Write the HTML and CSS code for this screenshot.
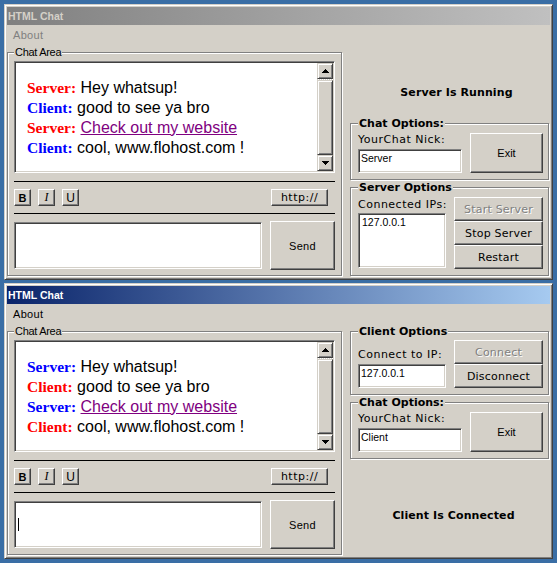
FILE: index.html
```html
<!DOCTYPE html>
<html>
<head>
<meta charset="utf-8">
<title>HTML Chat</title>
<link rel="stylesheet" href="styles.css">
</head>
<body>
<div class="desktop">

  <div class="window inactive">
    <div class="titlebar">HTML Chat</div>
    <div class="menubar"><span class="menu-item">About</span></div>
    <div class="content">
      <fieldset class="group chat-area">
        <legend>Chat Area</legend>
        <div class="chatbox sunken">
          <div class="messages">
            <div class="msg"><span class="nick red">Server:</span> Hey whatsup!</div>
            <div class="msg"><span class="nick blue">Client:</span> good to see ya bro</div>
            <div class="msg"><span class="nick red">Server:</span> <a class="link" href="#">Check out my website</a></div>
            <div class="msg"><span class="nick blue">Client:</span> cool, www.flohost.com !</div>
          </div>
          <div class="scrollbar">
            <div class="sb-btn raised"><svg width="7" height="4" viewBox="0 0 7 4" shape-rendering="crispEdges"><path d="M3 0h1v1H3zM2 1h3v1H2zM1 2h5v1H1zM0 3h7v1H0z"/></svg></div>
            <div class="sb-thumb raised"></div>
            <div class="sb-btn raised"><svg width="7" height="4" viewBox="0 0 7 4" shape-rendering="crispEdges"><path d="M0 0h7v1H0zM1 1h5v1H1zM2 2h3v1H2zM3 3h1v1H3z"/></svg></div>
          </div>
        </div>
        <hr class="sep sep-top">
        <div class="toolbar">
          <button class="btn tool tool-b">B</button>
          <button class="btn tool tool-i">I</button>
          <button class="btn tool tool-u">U</button>
          <button class="btn http">http://</button>
        </div>
        <hr class="sep">
        <div class="compose">
          <div class="compose-input sunken"></div>
          <button class="btn send">Send</button>
        </div>
      </fieldset>

      <div class="side">
        <div class="status status-server">Server Is Running</div>
        <fieldset class="group opts">
          <legend>Chat Options:</legend>
          <div class="row">
            <div class="col col-wide">
              <div class="label">YourChat Nick:</div>
              <div class="field sunken">Server</div>
            </div>
            <button class="btn exit">Exit</button>
          </div>
        </fieldset>
        <fieldset class="group server-opts">
          <legend>Server Options</legend>
          <div class="row">
            <div class="col col-narrow">
              <div class="label label-ips">Connected IPs:</div>
              <div class="listbox sunken">127.0.0.1</div>
            </div>
            <div class="btn-stack">
              <button class="btn stack-btn disabled">Start Server</button>
              <button class="btn stack-btn">Stop Server</button>
              <button class="btn stack-btn">Restart</button>
            </div>
          </div>
        </fieldset>
      </div>
    </div>
  </div>

  <div class="window active">
    <div class="titlebar">HTML Chat</div>
    <div class="menubar"><span class="menu-item">About</span></div>
    <div class="content">
      <fieldset class="group chat-area">
        <legend>Chat Area</legend>
        <div class="chatbox sunken">
          <div class="messages">
            <div class="msg"><span class="nick blue">Server:</span> Hey whatsup!</div>
            <div class="msg"><span class="nick red">Client:</span> good to see ya bro</div>
            <div class="msg"><span class="nick blue">Server:</span> <a class="link" href="#">Check out my website</a></div>
            <div class="msg"><span class="nick red">Client:</span> cool, www.flohost.com !</div>
          </div>
          <div class="scrollbar">
            <div class="sb-btn raised"><svg width="7" height="4" viewBox="0 0 7 4" shape-rendering="crispEdges"><path d="M3 0h1v1H3zM2 1h3v1H2zM1 2h5v1H1zM0 3h7v1H0z"/></svg></div>
            <div class="sb-thumb raised"></div>
            <div class="sb-btn raised"><svg width="7" height="4" viewBox="0 0 7 4" shape-rendering="crispEdges"><path d="M0 0h7v1H0zM1 1h5v1H1zM2 2h3v1H2zM3 3h1v1H3z"/></svg></div>
          </div>
        </div>
        <hr class="sep sep-top">
        <div class="toolbar">
          <button class="btn tool tool-b">B</button>
          <button class="btn tool tool-i">I</button>
          <button class="btn tool tool-u">U</button>
          <button class="btn http">http://</button>
        </div>
        <hr class="sep">
        <div class="compose">
          <div class="compose-input sunken"><span class="caret"></span></div>
          <button class="btn send">Send</button>
        </div>
      </fieldset>

      <div class="side">
        <fieldset class="group client-opts">
          <legend>Client Options</legend>
          <div class="row">
            <div class="col col-narrow">
              <div class="label label-ip">Connect to IP:</div>
              <div class="field sunken">127.0.0.1</div>
            </div>
            <div class="btn-stack">
              <button class="btn stack-btn disabled">Connect</button>
              <button class="btn stack-btn">Disconnect</button>
            </div>
          </div>
        </fieldset>
        <fieldset class="group opts opts-client">
          <legend>Chat Options:</legend>
          <div class="row">
            <div class="col col-wide">
              <div class="label">YourChat Nick:</div>
              <div class="field sunken">Client</div>
            </div>
            <button class="btn exit">Exit</button>
          </div>
        </fieldset>
        <div class="status status-client">Client Is Connected</div>
      </div>
    </div>
  </div>

</div>
</body>
</html>
```

FILE: styles.css
```css
* {
  box-sizing: border-box;
}

html,
body {
  margin: 0;
  padding: 0;
}

body {
  background: #3a6ea5;
  font-family: "DejaVu Sans", sans-serif;
  font-size: 11px;
  color: #000;
}

.desktop {
  display: flex;
  flex-direction: column;
  gap: 3px;
  padding: 4px 0 0 4px;
}

/* ---------- window frame ---------- */
.window {
  width: 549px;
  height: 276px;
  display: flex;
  flex-direction: column;
  background: #d4d0c8;
  border: 1px solid;
  border-color: #d4d0c8 #404040 #404040 #d4d0c8;
  box-shadow: inset 1px 1px 0 #fff, inset -1px -1px 0 #808080;
  padding: 2px;
}

.titlebar {
  height: 18px;
  padding-left: 1px;
  font: bold 10.5px/18px "Liberation Sans", sans-serif;
}

.inactive .titlebar {
  background: linear-gradient(to right, #808080, #c0c0c0);
  color: #d4d0c8;
}

.active .titlebar {
  background: linear-gradient(to right, #0a246a, #a6caf0);
  color: #fff;
}

.menubar {
  height: 20px;
  padding-left: 6px;
  font: 11px/20px "Liberation Sans", sans-serif;
  letter-spacing: 0.3px;
}

.inactive .menu-item {
  color: #808080;
}

.content {
  flex: 1;
  display: flex;
  gap: 8px;
}

/* ---------- group boxes ---------- */
.group {
  margin: 0;
  padding: 0;
  min-width: 0;
  border: 1px solid #808080;
  box-shadow: 1px 1px 0 #fff, inset 1px 1px 0 #fff;
}

.group legend {
  padding: 0 1px;
  margin: 0;
  height: 13px;
  background: #d4d0c8;
  font: bold 11px/13px "DejaVu Sans", sans-serif;
  white-space: nowrap;
}

.chat-area {
  width: 335px;
  height: 230px;
  margin-top: 1px;
  padding: 2px 6px 5px 6px;
}

.chat-area legend {
  font: 11px/12px "Liberation Sans", sans-serif;
  letter-spacing: -0.3px;
}

/* ---------- 3D styles ---------- */
.sunken {
  background: #fff;
  border: 1px solid;
  border-color: #808080 #fff #fff #808080;
  box-shadow: inset 1px 1px 0 #404040, inset -1px -1px 0 #d4d0c8;
}

.raised {
  background: #d4d0c8;
  border: 1px solid;
  border-color: #d4d0c8 #404040 #404040 #d4d0c8;
  box-shadow: inset 1px 1px 0 #fff, inset -1px -1px 0 #808080;
}

.btn {
  margin: 0;
  padding: 0;
  font: 11px "DejaVu Sans", sans-serif;
  color: #000;
  background: #d4d0c8;
  border: 1px solid;
  border-color: #fff #404040 #404040 #fff;
  box-shadow: inset -1px -1px 0 #808080;
  display: flex;
  align-items: center;
  justify-content: center;
  white-space: nowrap;
}

.btn.disabled {
  color: #808080;
  text-shadow: 1px 1px 0 #fff;
}

/* ---------- chat display ---------- */
.chatbox {
  height: 112px;
  display: flex;
  padding: 1px;
}

.messages {
  flex: 1;
  padding: 15px 0 0 11px;
  font: 16px/20px "Liberation Sans", Arial, sans-serif;
  white-space: nowrap;
  overflow: hidden;
}

.nick {
  font: bold 15.5px/20px "Liberation Serif", serif;
}

.red {
  color: #ff0000;
}

.blue {
  color: #0000ff;
}

.link {
  color: #800080;
  text-decoration: underline;
}

.scrollbar {
  width: 16px;
  display: flex;
  flex-direction: column;
  background: repeating-conic-gradient(#fff 0 25%, #d4d0c8 0 50%) 0 0 / 2px 2px;
}

.sb-btn {
  height: 16px;
  flex: none;
  display: flex;
  align-items: center;
  justify-content: center;
}

.sb-btn svg {
  display: block;
  fill: #000;
}

.sb-thumb {
  flex: 1;
  margin-top: 1px;
}

/* ---------- separators / toolbar ---------- */
.sep {
  margin: 7px 0;
  height: 1px;
  border: 0;
  background: #000;
}

.sep-top {
  margin-top: 8px;
}

.toolbar {
  height: 17px;
  display: flex;
  gap: 7px;
}

.tool {
  width: 17px;
  height: 17px;
}

.tool-b {
  font: bold 11px "Liberation Sans", sans-serif;
}

.tool-i {
  font: italic 12px "Liberation Serif", serif;
}

.tool-u {
  font: 12px "Liberation Sans", sans-serif;
}

.http {
  width: 57px;
  height: 17px;
  margin-left: auto;
  margin-right: 7px;
  letter-spacing: 0.5px;
}

.compose {
  height: 49px;
  display: flex;
  align-items: center;
  gap: 8px;
}

.compose-input {
  width: 248px;
  height: 47px;
  display: flex;
  align-items: center;
  padding-left: 3px;
}

.caret {
  width: 1px;
  height: 13px;
  background: #000;
}

.send {
  width: 65px;
  height: 49px;
  font: 11px "Liberation Sans", sans-serif;
  letter-spacing: 0.3px;
}

/* ---------- side column ---------- */
.side {
  width: 200px;
  display: flex;
  flex-direction: column;
}

.side .group {
  width: 199px;
  padding: 3px 5px 6px 7px;
}

.status {
  font: bold 11px/13px "DejaVu Sans", sans-serif;
  text-align: center;
  white-space: nowrap;
  letter-spacing: 0.1px;
}

.status-server {
  height: 72px;
  padding: 41px 0 0 13px;
}

.status-client {
  padding: 50px 0 0 7px;
}

.opts {
  height: 63px;
}

.server-opts {
  height: 95px;
  margin-top: 1px;
}

.client-opts {
  height: 70px;
  margin-top: 1px;
}

.side .client-opts {
  padding-top: 2px;
}

.opts-client {
  margin-top: 1px;
}

.row {
  display: flex;
  gap: 8px;
}

.col {
  display: flex;
  flex-direction: column;
}

.col-wide {
  width: 104px;
}

.col-narrow {
  width: 88px;
}

.label {
  line-height: 13px;
  white-space: nowrap;
  letter-spacing: 0.5px;
}

.label-ips {
  margin-top: 1px;
}

.label-ip {
  margin-top: 8px;
}

.field {
  height: 24px;
  margin-top: 3px;
  padding: 1px 2px 0;
  font: 10.5px/14px "Liberation Sans", sans-serif;
}

.listbox {
  height: 55px;
  margin-top: 2px;
  padding: 1px 3px 0;
  font: 10.5px/14px "Liberation Sans", sans-serif;
}

.exit {
  width: 73px;
  height: 40px;
  font: 11px "Liberation Sans", sans-serif;
}

.btn-stack {
  width: 89px;
  display: flex;
  flex-direction: column;
}

.stack-btn {
  height: 24px;
  letter-spacing: 0.2px;
}
```
